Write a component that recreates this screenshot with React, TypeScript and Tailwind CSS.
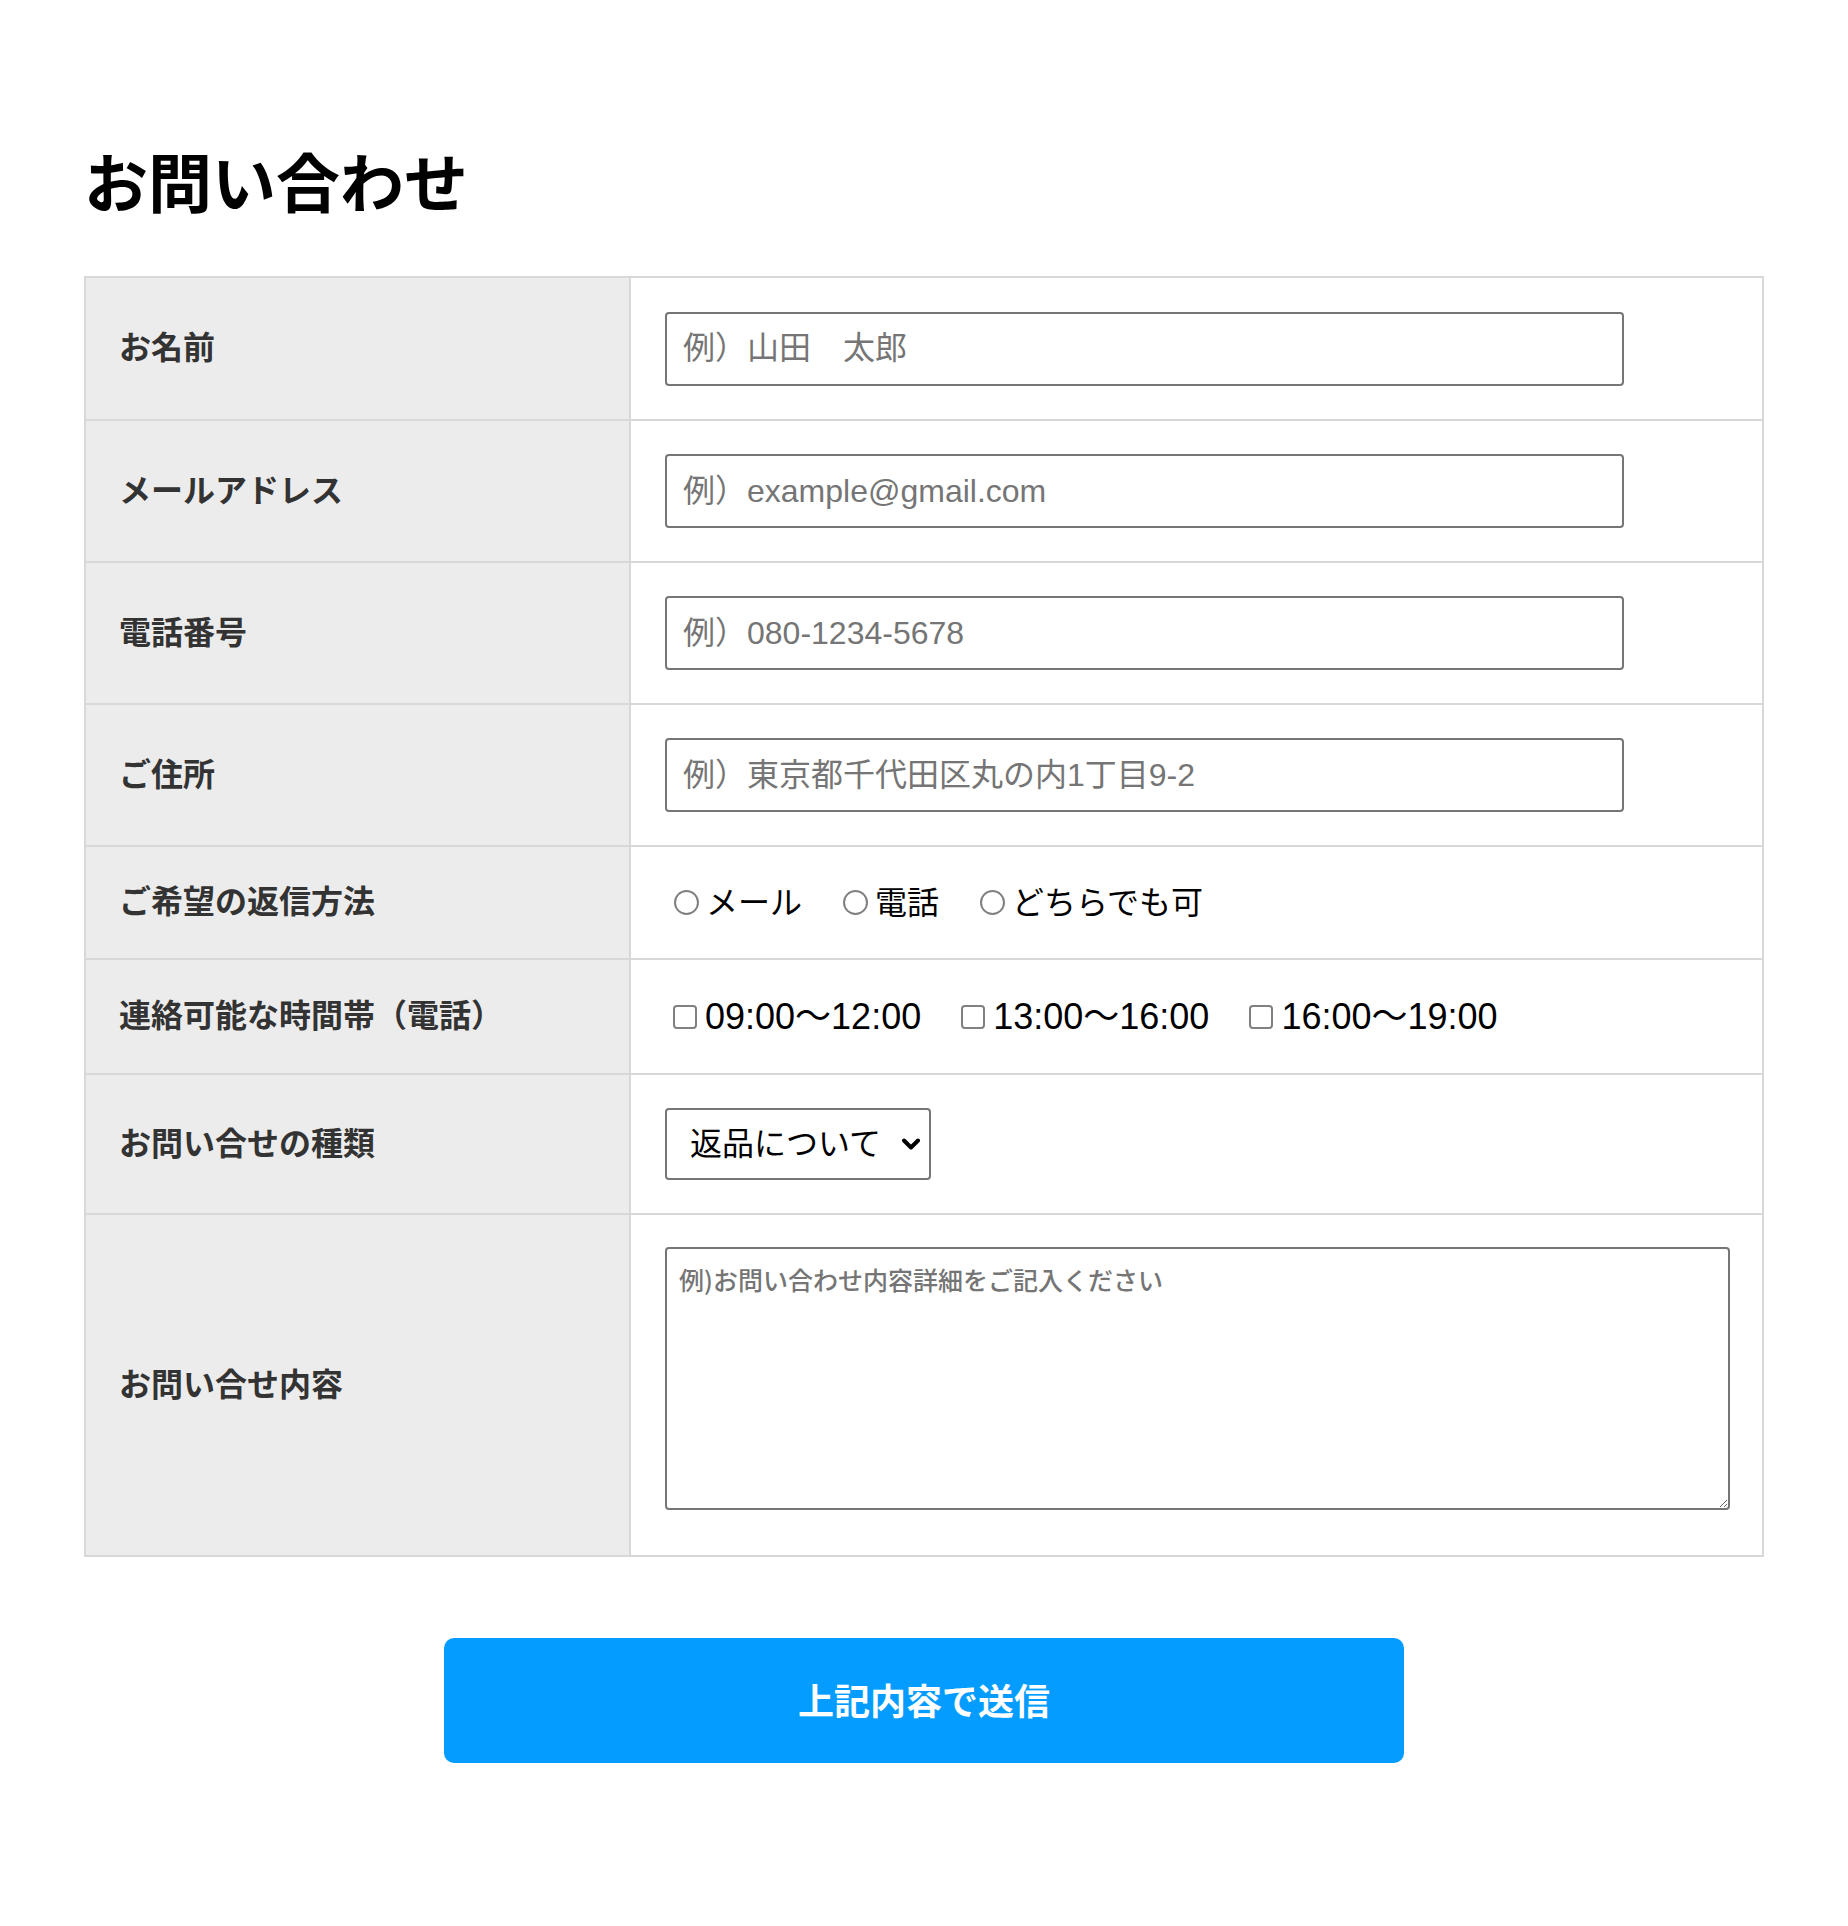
import { ReactNode } from 'react';

const jp = { fontFamily: '"Noto Sans CJK JP", sans-serif' };
const latin = { fontFamily: '"Liberation Sans", "Noto Sans CJK JP", sans-serif' };

interface RowProps {
  label: string;
  height: string;
  first?: boolean;
  top?: boolean;
  children: ReactNode;
}

function Row({ label, height, first, top, children }: RowProps) {
  return (
    <div className={`flex ${height} ${first ? '' : 'border-t-2 border-[#d8d8d8]'}`}>
      <div className="w-[545px] shrink-0 bg-[#ececec] border-r-2 border-[#d8d8d8] flex items-center px-[33px] pb-[7px] text-[32px] font-bold text-[#333]">
        {label}
      </div>
      <div className={`flex-1 flex pl-[34px] pr-[32px] ${top ? 'items-start pt-[32px]' : 'items-center'}`}>
        {children}
      </div>
    </div>
  );
}

function TextField({ placeholder }: { placeholder: string }) {
  return (
    <input
      type="text"
      placeholder={placeholder}
      style={latin}
      className="w-[90%] h-[74px] border-2 border-[#767676] rounded-[4px] px-[16px] text-[32px] text-black placeholder:text-[#757575] bg-white outline-none"
    />
  );
}

const replyOptions = ['メール', '電話', 'どちらでも可'];
const timeOptions = ['09:00〜12:00', '13:00〜16:00', '16:00〜19:00'];

export default function App() {
  return (
    <div className="min-h-screen bg-white px-[84px] pt-[147px] pb-[163px]" style={jp}>
      <h1 className="text-[64px] leading-[64px] font-bold text-black mb-[65px]">お問い合わせ</h1>

      <div className="border-2 border-[#d8d8d8]">
        <Row label="お名前" height="h-[141px]" first>
          <TextField placeholder="例）山田　太郎" />
        </Row>
        <Row label="メールアドレス" height="h-[142px]">
          <TextField placeholder="例）example@gmail.com" />
        </Row>
        <Row label="電話番号" height="h-[142px]">
          <TextField placeholder="例）080-1234-5678" />
        </Row>
        <Row label="ご住所" height="h-[142px]">
          <TextField placeholder="例）東京都千代田区丸の内1丁目9-2" />
        </Row>
        <Row label="ご希望の返信方法" height="h-[113px]">
          <div className="flex items-center gap-[32px]">
            {replyOptions.map((opt) => (
              <label key={opt} className="flex items-center text-[32px] leading-[45px] text-black">
                <input
                  type="radio"
                  name="reply"
                  className="appearance-none w-[25px] h-[25px] rounded-full border-2 border-[#808080] bg-white ml-[9px] mr-[7px]"
                />
                <span className="pb-[4px]">{opt}</span>
              </label>
            ))}
          </div>
        </Row>
        <Row label="連絡可能な時間帯（電話）" height="h-[115px]">
          <div className="flex items-center gap-[32px]">
            {timeOptions.map((opt) => (
              <label key={opt} className="flex items-center text-[36px] leading-[47px] text-black" style={latin}>
                <input
                  type="checkbox"
                  className="appearance-none w-[24px] h-[24px] rounded-[4px] border-2 border-[#808080] bg-white ml-[8px] mr-[8px]"
                />
                {opt}
              </label>
            ))}
          </div>
        </Row>
        <Row label="お問い合せの種類" height="h-[140px]">
          <div className="relative w-[266px] h-[72px]">
            <select
              defaultValue="返品について"
              className="appearance-none w-full h-full border-2 border-[#767676] rounded-[4px] bg-white pl-[23px] pr-[40px] pb-[6px] text-[32px] text-black outline-none"
            >
              <option>返品について</option>
              <option>商品について</option>
              <option>配送について</option>
              <option>その他</option>
            </select>
            <svg
              className="absolute right-[10px] top-[30px] pointer-events-none"
              width="20"
              height="12"
              viewBox="0 0 20 12"
              fill="none"
            >
              <path d="M3 2.5l7 7 7-7" stroke="#000" strokeWidth="4" strokeLinecap="round" strokeLinejoin="round" />
            </svg>
          </div>
        </Row>
        <Row label="お問い合せ内容" height="h-[342px]" top>
          <textarea
            placeholder="例)お問い合わせ内容詳細をご記入ください"
            className="w-full h-[263px] border-2 border-[#767676] rounded-[4px] px-[12px] py-[12px] text-[25px] leading-[36px] font-medium text-black placeholder:text-[#757575] bg-white outline-none"
          />
        </Row>
      </div>

      <div className="flex justify-center mt-[81px]">
        <button className="w-[960px] h-[125px] rounded-[10px] bg-[#049dff] text-white text-[36px] font-bold pb-[3px]">
          上記内容で送信
        </button>
      </div>
    </div>
  );
}
